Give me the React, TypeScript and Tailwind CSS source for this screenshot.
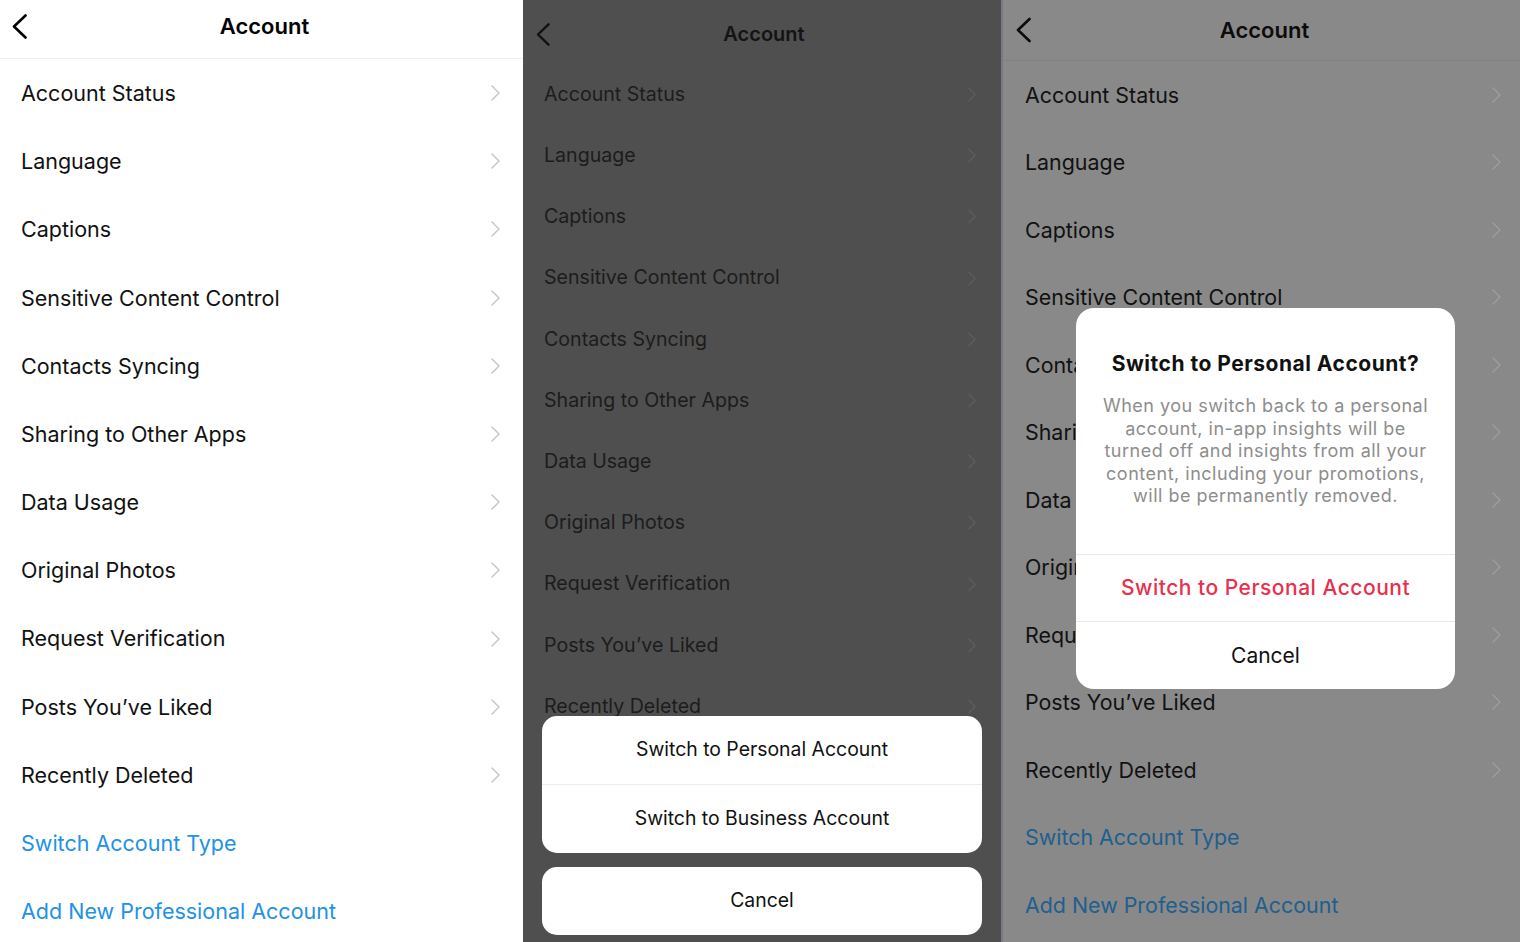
import React from "react";

const ITEMS = [
  "Account Status",
  "Language",
  "Captions",
  "Sensitive Content Control",
  "Contacts Syncing",
  "Sharing to Other Apps",
  "Data Usage",
  "Original Photos",
  "Request Verification",
  "Posts You\u2019ve Liked",
  "Recently Deleted",
];

const font = { fontFamily: "Inter, 'Noto Sans', sans-serif" };

function Back({ color, w, h }: { color: string; w: number; h: number }) {
  return (
    <svg width={w} height={h} viewBox="0 0 15 25" fill="none">
      <polyline points="13.5,1.5 2,12.5 13.5,23.5" stroke={color} strokeWidth="2.6" strokeLinecap="round" strokeLinejoin="round" />
    </svg>
  );
}

function Chev({ color, w, h }: { color: string; w: number; h: number }) {
  return (
    <svg width={w} height={h} viewBox="0 0 9 16" fill="none">
      <polyline points="1,1 8,8 1,15" stroke={color} strokeWidth="1.4" strokeLinecap="round" strokeLinejoin="round" />
    </svg>
  );
}

function PanelOne() {
  return (
    <div className="w-[523px] h-[942px] bg-white overflow-hidden shrink-0" style={font}>
      <div className="h-[59px] flex items-center relative border-b border-[#efefef] pb-[6px]">
        <div className="pl-[12px]">
          <Back color="#000" w={15} h={25} />
        </div>
        <div className="absolute inset-x-0 top-0 h-[53px] flex items-center justify-center text-[22px] font-semibold text-black pl-[6px]">Account</div>
      </div>
      {ITEMS.map((t) => (
        <div key={t} className="h-[68.2px] flex items-center justify-between pl-[21px] pr-[23px] text-[21.5px] text-[#111]">
          <span>{t}</span>
          <Chev color="#c4c4c4" w={9} h={16} />
        </div>
      ))}
      <div className="h-[68.2px] flex items-center pl-[21px] text-[21.5px] text-[#2291e6]">Switch Account Type</div>
      <div className="h-[68.2px] flex items-center pl-[21px] text-[21.5px] text-[#2291e6]">Add New Professional Account</div>
    </div>
  );
}

function PanelTwo() {
  return (
    <div className="w-[478px] h-[942px] bg-[#4f4f4f] overflow-hidden shrink-0 relative" style={font}>
      <div className="pt-[4px]">
        <div className="h-[60px] flex items-center relative">
          <div className="pl-[13px]">
            <Back color="#111" w={14} h={23} />
          </div>
          <div className="absolute inset-0 flex items-center justify-center text-[20px] font-semibold text-[#141414] pl-[4px]">Account</div>
        </div>
        {ITEMS.map((t) => (
          <div key={t} className="h-[61.2px] flex items-center justify-between pl-[21px] pr-[25px] text-[19.6px] text-[#1c1c1c]">
            <span>{t}</span>
            <Chev color="#5e5e5e" w={8} h={15} />
          </div>
        ))}
        <div className="h-[61.2px] flex items-center pl-[21px] text-[19.6px] text-[#1d4a6b]">Switch Account Type</div>
      </div>
      <div className="absolute left-[19px] top-[716px] w-[440px] bg-white rounded-[15px] overflow-hidden">
        <div className="h-[69px] flex items-center justify-center text-[19.4px] text-[#111] border-b border-[#ececec]">Switch to Personal Account</div>
        <div className="h-[68px] flex items-center justify-center text-[19.4px] text-[#111]">Switch to Business Account</div>
      </div>
      <div className="absolute left-[19px] top-[867px] w-[440px] h-[68px] bg-white rounded-[15px] flex items-center justify-center text-[19.4px] text-[#111]">Cancel</div>
    </div>
  );
}

function PanelThree() {
  return (
    <div className="flex-1 h-[942px] bg-[#898989] overflow-hidden relative border-l-[2px] border-[#7a7788]" style={font}>
      <div className="h-[61px] flex items-center relative border-b border-[#828282]">
        <div className="pl-[13px]">
          <Back color="#0c0c0c" w={15} h={26} />
        </div>
        <div className="absolute inset-0 flex items-center justify-center text-[22px] font-semibold text-[#0c0c0c] pl-[6px]">Account</div>
      </div>
      {ITEMS.map((t) => (
        <div key={t} className="h-[67.5px] flex items-center justify-between pl-[22px] pr-[19px] text-[21.4px] text-[#111]">
          <span>{t}</span>
          <Chev color="#9e9e9e" w={9} h={16} />
        </div>
      ))}
      <div className="h-[67.5px] flex items-center pl-[22px] text-[21.4px] text-[#1f5f8d]">Switch Account Type</div>
      <div className="h-[67.5px] flex items-center pl-[22px] text-[21.4px] text-[#1f5f8d]">Add New Professional Account</div>

      <div className="absolute left-[73px] top-[308px] w-[379px] h-[381px] bg-white rounded-[18px] overflow-hidden flex flex-col">
        <div className="h-[247px] flex flex-col items-center pt-[41px] px-[10px] border-b border-[#e6e6e6]">
          <div className="text-[21px] font-bold text-[#111] leading-[30px] tracking-[0.5px] whitespace-nowrap">Switch to Personal Account?</div>
          <div className="mt-[16px] text-[18px] leading-[22.5px] tracking-[0.5px] text-[#8d8d8d] text-center whitespace-nowrap">
            When you switch back to a personal
            <br />
            account, in-app insights will be
            <br />
            turned off and insights from all your
            <br />
            content, including your promotions,
            <br />
            will be permanently removed.
          </div>
        </div>
        <div className="h-[67px] flex items-center justify-center text-[21px] font-medium tracking-[0.5px] text-[#e8304e] border-b border-[#e6e6e6]">Switch to Personal Account</div>
        <div className="flex-1 flex items-center justify-center text-[21px] text-[#111]">Cancel</div>
      </div>
    </div>
  );
}

export default function App() {
  return (
    <div className="w-[1520px] h-[942px] flex overflow-hidden">
      <PanelOne />
      <PanelTwo />
      <PanelThree />
    </div>
  );
}
